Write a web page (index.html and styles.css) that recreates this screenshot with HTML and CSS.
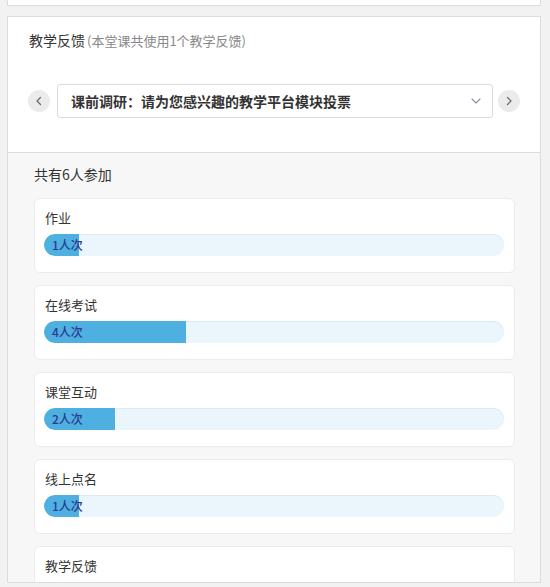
FILE: index.html
```html
<!DOCTYPE html>
<html lang="zh-CN">
<head>
<meta charset="utf-8">
<title>教学反馈</title>
<link rel="stylesheet" href="styles.css">
</head>
<body>
<div class="page">
  <div class="top-card"></div>
  <div class="main-card">
    <div class="header">
      <div class="title">教学反馈<span class="sub">(本堂课共使用1个教学反馈)</span></div>
      <div class="select-row">
        <button class="nav-btn" aria-label="上一个">
          <svg width="10" height="10" viewBox="0 0 10 10"><path d="M6.5 1.5 L3 5 L6.5 8.5" fill="none" stroke="#666" stroke-width="1.2" stroke-linecap="round" stroke-linejoin="round"/></svg>
        </button>
        <div class="select">
          <span class="select-text">课前调研：请为您感兴趣的教学平台模块投票</span>
          <svg class="caret" width="10" height="6" viewBox="0 0 10 6"><path d="M1 1 L5 5 L9 1" fill="none" stroke="#8a8fa0" stroke-width="1.1" stroke-linecap="round" stroke-linejoin="round"/></svg>
        </div>
        <button class="nav-btn" aria-label="下一个">
          <svg width="10" height="10" viewBox="0 0 10 10"><path d="M3.5 1.5 L7 5 L3.5 8.5" fill="none" stroke="#666" stroke-width="1.2" stroke-linecap="round" stroke-linejoin="round"/></svg>
        </button>
      </div>
    </div>
    <div class="stats">
      <div class="total">共有6人参加</div>
      <div class="item">
        <div class="label">作业</div>
        <div class="track"><div class="fill" style="width:7.7%"><span>1人次</span></div></div>
      </div>
      <div class="item">
        <div class="label">在线考试</div>
        <div class="track"><div class="fill" style="width:30.9%"><span>4人次</span></div></div>
      </div>
      <div class="item">
        <div class="label">课堂互动</div>
        <div class="track"><div class="fill" style="width:15.4%"><span>2人次</span></div></div>
      </div>
      <div class="item">
        <div class="label">线上点名</div>
        <div class="track"><div class="fill" style="width:7.7%"><span>1人次</span></div></div>
      </div>
      <div class="item">
        <div class="label">教学反馈</div>
        <div class="track"></div>
      </div>
    </div>
  </div>
</div>
</body>
</html>
```

FILE: styles.css
```css
html, body {
  margin: 0;
  padding: 0;
  background: #f2f2f2;
  font-family: "Noto Sans CJK SC", "Noto Sans", "Liberation Sans", sans-serif;
  color: #333;
  overflow: hidden;
  height: 587px;
}

.page {
  width: 534px;
  margin-left: 7px;
}

.top-card {
  height: 5px;
  background: #fff;
  border: 1px solid #dcdcdc;
  border-top: none;
}

.main-card {
  margin-top: 10px;
  border: 1px solid #dcdcdc;
  background: #f7f7f7;
  width: 532px;
  height: 565px;
  overflow: hidden;
}

.header {
  background: #fff;
  padding: 13px 20px 34px 20px;
  border-bottom: 1px solid #dcdcdc;
}

.title {
  font-size: 14px;
  line-height: 20px;
  color: #333;
  padding-left: 1px;
}

.sub {
  font-size: 13px;
  color: #888;
  margin-left: 2px;
}

.select-row {
  margin-top: 33px;
  display: flex;
  align-items: center;
}

.nav-btn {
  width: 22px;
  height: 22px;
  border-radius: 50%;
  border: none;
  background: #ebebeb;
  padding: 0;
  display: flex;
  align-items: center;
  justify-content: center;
  flex: none;
}

.select {
  flex: 1;
  margin: 0 5px 0 7px;
  height: 32px;
  border: 1px solid #dcdcdc;
  border-radius: 3px;
  display: flex;
  align-items: center;
  justify-content: space-between;
  padding: 0 11px 0 13px;
}

.select-text {
  font-size: 14px;
  font-weight: bold;
  color: #333;
}

.caret {
  display: block;
}

.stats {
  padding: 11px 25px 0 26px;
}

.total {
  font-size: 14px;
  line-height: 20px;
  margin-bottom: 14px;
}

.item {
  background: #fff;
  border: 1px solid #ececec;
  border-radius: 6px;
  padding: 9px 10px 16px 9px;
  margin-bottom: 12px;
}

.label {
  font-size: 13px;
  line-height: 20px;
  padding-left: 1px;
  margin-bottom: 6px;
  color: #333;
}

.track {
  height: 22px;
  border-radius: 11px;
  background: #eaf5fc;
  overflow: hidden;
  box-shadow: inset 0 1px 0 #dfe9f1;
}

.fill {
  height: 22px;
  background: #4eb0e1;
  border-radius: 11px 0 0 11px;
  white-space: nowrap;
  font-size: 12px;
  line-height: 22px;
  color: #2b3a8f;
  font-weight: 500;
  padding-left: 8px;
  box-sizing: border-box;
  overflow: visible;
}
```
